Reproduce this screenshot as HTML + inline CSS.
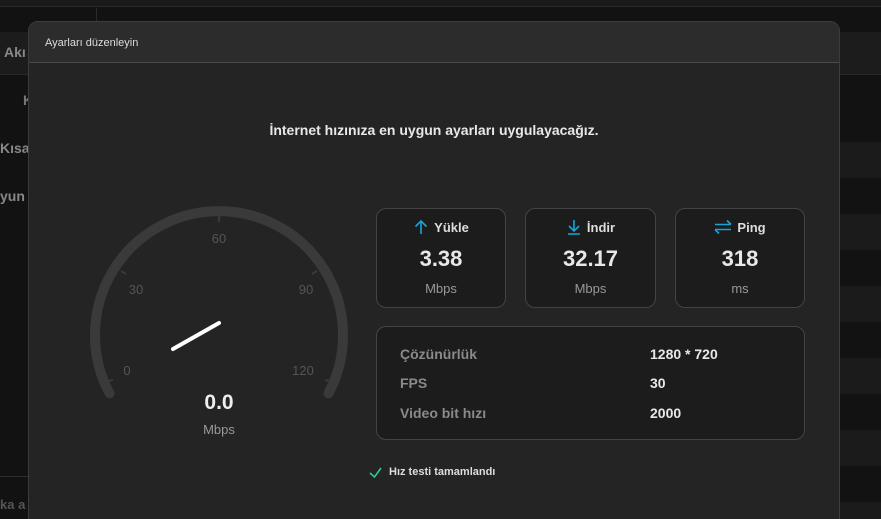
<!DOCTYPE html>
<html><head><meta charset="utf-8"><style>
*{margin:0;padding:0;box-sizing:border-box}
html,body{width:881px;height:519px;overflow:hidden}
body{background:#121212;font-family:"Liberation Sans",sans-serif;position:relative}
.abs{position:absolute}
.card{position:absolute;border:1px solid #444;border-radius:10px;background:#1c1c1c}
.ct{position:absolute;top:10px;left:0;right:0;text-align:center;color:#ddd;font-weight:bold;font-size:13px}
.ct svg{vertical-align:-3px;margin-right:5px}
.cv{position:absolute;top:37px;left:0;right:0;text-align:center;color:#e8e8e8;font-weight:bold;font-size:22px}
.cu{position:absolute;top:72px;left:0;right:0;text-align:center;color:#999;font-size:13px}
.lab{position:absolute;color:#8a8a8a;font-weight:bold;font-size:14px}
.val{position:absolute;color:#e8e8e8;font-weight:bold;font-size:14px}
</style></head><body>
<div class="abs" style="left:0;top:0;width:881px;height:7px;background:#1a1a1a;border-bottom:1px solid #2a2a2a"></div>
<div class="abs" style="left:96px;top:8px;width:1px;height:24px;background:#2a2a2a"></div>
<div class="abs" style="left:0;top:32px;width:881px;height:43px;background:#1c1c1c;border-bottom:1px solid #2a2a2a"></div>
<div class="abs" style="left:4px;top:44px;color:#888;font-weight:bold;font-size:14px">Akı</div>
<div class="abs" style="left:23px;top:92px;color:#777;font-weight:bold;font-size:14px">K</div>
<div class="abs" style="left:0;top:140px;color:#888;font-weight:bold;font-size:14px">Kısa</div>
<div class="abs" style="left:0;top:188px;color:#888;font-weight:bold;font-size:14px">yun</div>
<div class="abs" style="left:0;top:476px;width:28px;height:1px;background:#2e2e2e"></div>
<div class="abs" style="left:0;top:497px;color:#555;font-weight:bold;font-size:13px">ka a</div>
<div class="abs" style="left:840px;top:142px;width:41px;height:36px;background:#1b1b1b"></div>
<div class="abs" style="left:840px;top:214px;width:41px;height:36px;background:#1b1b1b"></div>
<div class="abs" style="left:840px;top:286px;width:41px;height:36px;background:#1b1b1b"></div>
<div class="abs" style="left:840px;top:358px;width:41px;height:36px;background:#1b1b1b"></div>
<div class="abs" style="left:840px;top:430px;width:41px;height:36px;background:#1b1b1b"></div>
<div class="abs" style="left:840px;top:502px;width:41px;height:17px;background:#1b1b1b"></div>
<div class="abs" style="left:28px;top:21px;width:812px;height:510px;background:#242424;border:1px solid #3c3c3c;border-radius:10px;overflow:hidden">
 <div style="height:41px;background:#2c2c2c;border-bottom:1px solid #4a4a4a;color:#ddd;font-size:11px;padding:15px 0 0 16px">Ayarları düzenleyin</div>
</div>
<div class="abs" style="left:28px;top:122px;width:812px;text-align:center;color:#e8e8e8;font-weight:bold;font-size:14px">İnternet hızınıza en uygun ayarları uygulayacağız.</div>
<svg class="abs" style="left:0;top:0" width="881" height="519">
 <path d="M109.5 393.3 A124 124 0 1 1 328.5 393.3" fill="none" stroke="#3a3a3a" stroke-width="10" stroke-linecap="round"/>
 <g stroke="#3a3a3a" stroke-width="2">
 <line x1="219" y1="216" x2="219" y2="222"/>
 <line x1="121" y1="271" x2="126" y2="274"/>
 <line x1="317" y1="271" x2="312" y2="274"/>
 <line x1="108" y1="381" x2="113" y2="380"/>
 <line x1="330" y1="381" x2="325" y2="380"/>
 </g>
 <line x1="173" y1="349" x2="219" y2="323" stroke="#fff" stroke-width="4" stroke-linecap="round"/>
 <g fill="#555" font-family="Liberation Sans" font-size="13" text-anchor="middle">
 <text x="219" y="243">60</text><text x="136" y="294">30</text><text x="306" y="294">90</text><text x="127" y="375">0</text><text x="303" y="375">120</text>
 </g>
 <text x="219" y="409" fill="#eee" font-family="Liberation Sans" font-weight="bold" font-size="21" text-anchor="middle">0.0</text>
 <text x="219" y="434" fill="#999" font-family="Liberation Sans" font-size="13" text-anchor="middle">Mbps</text>
 <path d="M370 473 L374.5 477 L381 468" fill="none" stroke="#2ecc8f" stroke-width="1.6"/>
</svg>
<div class="card" style="left:376px;top:208px;width:130px;height:100px"><div class="ct"><svg width="16" height="16" viewBox="0 0 16 16"><path d="M8 15V2M2.5 7.5L8 2l5.5 5.5" fill="none" stroke="#1aa3d6" stroke-width="1.6"/></svg>Yükle</div><div class="cv">3.38</div><div class="cu">Mbps</div></div>
<div class="card" style="left:525px;top:208px;width:131px;height:100px"><div class="ct"><svg width="16" height="16" viewBox="0 0 16 16"><path d="M8 1v11M3 7l5 5 5-5M2 15h12" fill="none" stroke="#1aa3d6" stroke-width="1.6"/></svg>İndir</div><div class="cv">32.17</div><div class="cu">Mbps</div></div>
<div class="card" style="left:675px;top:208px;width:130px;height:100px"><div class="ct"><svg width="18" height="16" viewBox="0 0 18 16"><path d="M1 5.5h16M13 1.5l4 4M17 10.5H1M5 14.5l-4-4" fill="none" stroke="#1aa3d6" stroke-width="1.6"/></svg>Ping</div><div class="cv">318</div><div class="cu">ms</div></div>
<div class="card" style="left:376px;top:326px;width:429px;height:114px">
 <div class="lab" style="left:23px;top:19px">Çözünürlük</div><div class="val" style="left:273px;top:19px">1280 * 720</div>
 <div class="lab" style="left:23px;top:48px">FPS</div><div class="val" style="left:273px;top:48px">30</div>
 <div class="lab" style="left:23px;top:78px">Video bit hızı</div><div class="val" style="left:273px;top:78px">2000</div>
</div>
<div class="abs" style="left:389px;top:466px;color:#ddd;font-weight:bold;font-size:11px">Hız testi tamamlandı</div>
</body></html>
